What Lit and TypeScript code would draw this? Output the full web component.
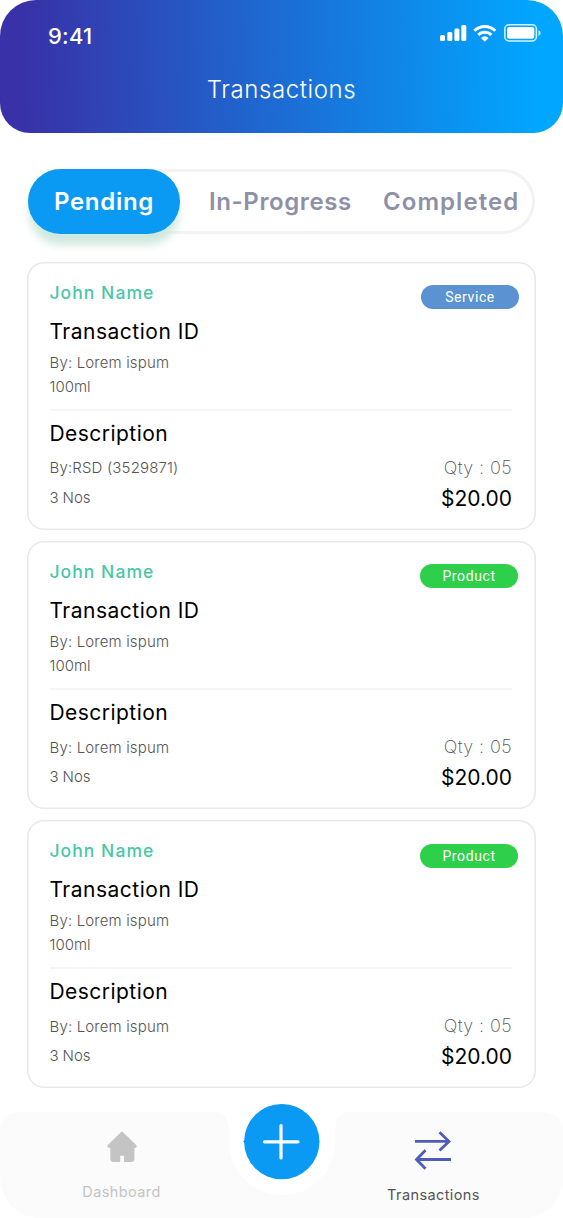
import { LitElement, html, css, svg } from "lit";
import { customElement, property } from "lit/decorators.js";
import { classMap } from "lit/directives/class-map.js";

interface Transaction {
  kind: "Service" | "Product";
  by: string;
  shift: boolean;
  low: boolean;
}

const transactions: Transaction[] = [
  { kind: "Service", by: "By:RSD (3529871)", shift: false, low: false },
  { kind: "Product", by: "By: Lorem ispum", shift: true, low: false },
  { kind: "Product", by: "By: Lorem ispum", shift: true, low: true },
];

@customElement("transaction-card")
class TransactionCard extends LitElement {
  @property({ attribute: false }) item!: Transaction;

  static styles = css`
    :host { display: block; }
    .card {
      box-sizing: border-box; height: 268px; border-radius: 17px; box-shadow: inset 0 0 0 1.6px #e9e9e9;
      padding: 18px 24px 0 22.5px; background: #fff; color: #555;
      font-family: Inter, sans-serif; font-size: 15px; font-weight: 300; white-space: nowrap;
    }
    .top { display: flex; justify-content: space-between; height: 24px; }
    .name { font-size: 17.5px; font-weight: 500; line-height: 25px; color: #4ac7a8; letter-spacing: 1.05px; }
    .badge {
      width: 98px; height: 24px; margin: 5px -7px 0 0; border-radius: 12px; background: #5b93d2; color: #fff;
      font: 400 14px/24px Roboto, sans-serif; letter-spacing: 0.6px; text-align: center;
    }
    .product { background: #2ecf4a; margin-right: -6px; }
    .low { margin-top: 6px; }
    .title { margin-top: 15px; font-size: 21px; font-weight: 400; line-height: 25px; color: #000; letter-spacing: 0.5px; }
    .maker { margin-top: 7px; line-height: 24px; letter-spacing: 0.16px; }
    .size { line-height: 23px; }
    .rule { height: 2px; margin-top: 11px; background: #f5f5f5; }
    .desc { margin-top: 10px; font-size: 21px; font-weight: 400; line-height: 26px; height: 24px; color: #000; letter-spacing: 0.45px; }
    .row { display: flex; justify-content: space-between; margin-top: 12px; height: 21px; line-height: 21px; }
    .row + .row { margin-top: 9px; }
    .by { letter-spacing: 0.16px; }
    .shift { padding-top: 1px; }
    .nos { letter-spacing: -0.1px; }
    .qty { font-size: 18px; letter-spacing: 0.4px; font-weight: 250; }
    .price { font-size: 21px; font-weight: 400; color: #000; line-height: 23px; }
  `;

  render() {
    const t = this.item;
    return html`<article class="card">
      <div class="top">
        <span class="name">John Name</span>
        <span class=${classMap({ badge: true, product: t.kind === "Product", low: t.low })}>${t.kind}</span>
      </div>
      <div class="title">Transaction ID</div>
      <div class="maker">By: Lorem ispum</div>
      <div class="size">100ml</div>
      <div class="rule"></div>
      <div class="desc">Description</div>
      <div class="row"><span class=${classMap({ by: true, shift: t.shift })}>${t.by}</span><span class="qty">Qty : 05</span></div>
      <div class="row"><span class="nos">3 Nos</span><span class="price">$20.00</span></div>
    </article>`;
  }
}

@customElement("app-root")
class AppRoot extends LitElement {
  static styles = css`
    :host { display: block; width: 563px; height: 1218px; overflow: hidden; background: #fff; font-family: Inter, sans-serif; }
    .screen { display: flex; flex-direction: column; height: 1218px; }
    .header {
      box-sizing: border-box; height: 133px; padding: 23px 21px 0 48px; border-radius: 36px 36px 30px 30px; color: #fff;
      background: linear-gradient(89deg, #3831a7 4%, #01a6ff 95%);
    }
    .status { display: flex; justify-content: space-between; height: 26px; }
    .clock { font-size: 22px; font-weight: 500; line-height: 26px; letter-spacing: 0.2px; }
    .heading { margin: 27px 27px 0 -27px; padding-left: 27px; font-size: 24px; font-weight: 300; line-height: 27px; text-align: center; letter-spacing: 0.58px; }
    .tabs {
      box-sizing: border-box; display: flex; height: 65px; width: 507px; margin: 36px 0 0 28px; border-radius: 33px;
      box-shadow: inset 0 0 0 3px #f3f3f4; font-size: 24px; font-weight: 600; line-height: 66px; color: #8e90a8;
    }
    .tab { white-space: nowrap; letter-spacing: 0.6px; }
    .active { width: 152px; border-radius: 33px; background: #0a99f3; color: #fff; text-align: center; box-shadow: 0 12px 9px -1px #cfe9df; letter-spacing: 0.7px; }
    .progress { margin-left: 29px; width: 174px; }
    .completed { letter-spacing: 1.05px; }
    .list { display: flex; flex-direction: column; gap: 11px; width: 509px; margin: 28px 0 0 27px; }
    .nav { position: relative; height: 106px; margin-top: auto; display: flex; }
    .shape { position: absolute; inset: 0; }
    .fab { position: absolute; left: 243px; top: -9px; }
    .item { position: relative; display: flex; flex-direction: column; align-items: center; font-size: 14.5px; line-height: 20px; letter-spacing: 0.4px; }
    .dash { margin-left: 71px; width: 101px; padding-top: 19px; color: #c4c4c4; }
    .dash .label { margin-top: 20px; }
    .trans { margin-left: 206px; width: 109px; padding-top: 17px; color: #555; }
    .trans .label { margin-top: 14px; padding-left: 2px; }
    svg { display: block; }
  `;

  private statusIcons() {
    return svg`<svg width="102" height="20" viewBox="440 23 102 20" fill="#fff">
      <rect x="440" y="35" width="5" height="6" rx="1.5"/><rect x="447.3" y="32" width="5" height="9" rx="1.5"/>
      <rect x="454.4" y="28.5" width="5" height="12.5" rx="1.5"/><rect x="461.3" y="25" width="5" height="16" rx="1.5"/>
      <g fill="none" stroke="#fff" stroke-width="3"><path d="M474.3 30.7a15 15 0 0 1 21 0"/><path d="M478.2 34.8a9.5 9.5 0 0 1 13.2 0"/></g>
      <path d="M481 38a5.8 5.8 0 0 1 7.6 0l-3.8 3.8z"/>
      <rect x="504.8" y="24.8" width="31.6" height="16.2" rx="4.2" fill="none" stroke="#fff" stroke-opacity=".85" stroke-width="1.5"/>
      <rect x="507" y="27" width="27.3" height="11.8" rx="2.2"/>
      <path d="M538.5 30.3q2.2.8 2.2 2.8t-2.2 2.8z" fill-opacity=".8"/>
    </svg>`;
  }

  render() {
    return html`<main class="screen">
      <header class="header">
        <div class="status"><span class="clock">9:41</span>${this.statusIcons()}</div>
        <div class="heading">Transactions</div>
      </header>
      <nav class="tabs">
        <span class="tab active">Pending</span>
        <span class="tab progress">In-Progress</span>
        <span class="tab completed">Completed</span>
      </nav>
      <section class="list">${transactions.map((t) => html`<transaction-card .item=${t}></transaction-card>`)}</section>
      <footer class="nav">
        <svg class="shape" width="563" height="106" viewBox="0 0 563 106">
          <path fill="#fbfbfb" d="M20 0H214Q229 0 229 20V30A53 53 0 0 0 335 30V20Q335 0 350 0H543Q563 1 563 20V66Q560 100 528 106H35Q4 100 0 66V20Q0 1 20 0Z"/>
        </svg>
        <div class="item dash">
          <svg width="30" height="31" viewBox="0 0 30 31" fill="#c4c4c4">
            <path d="M13.6 1.5Q15 .2 16.4 1.5L29.4 14.2Q30.5 17 27.4 17V27.5Q27.4 31 24 31H17V24.8H13.2V31H6.6Q3.3 31 3.3 27.5V17Q-.5 17 .6 14.2Z"/>
          </svg>
          <span class="label">Dashboard</span>
        </div>
        <div class="item trans">
          <svg width="38" height="42" viewBox="0 0 38 42" fill="none" stroke="#4f5db8" stroke-width="2.8">
            <path d="M1 12.4H35M25.5 3.2L35 12.4L25.5 21.6M37 30.5H3M11.5 21.3L2.5 30.5L11.5 39.7"/>
          </svg>
          <span class="label">Transactions</span>
        </div>
        <svg class="fab" width="78" height="78" viewBox="0 0 78 78">
          <path d="M0 38.5L3 36V41Z" fill="#0a99f3"/>
          <circle cx="38.8" cy="38.6" r="37.7" fill="#0a99f3"/>
          <path d="M38 22.5V55M21.5 38.8H55" stroke="#fff" stroke-width="3.2" stroke-linecap="round"/>
        </svg>
      </footer>
    </main>`;
  }
}
